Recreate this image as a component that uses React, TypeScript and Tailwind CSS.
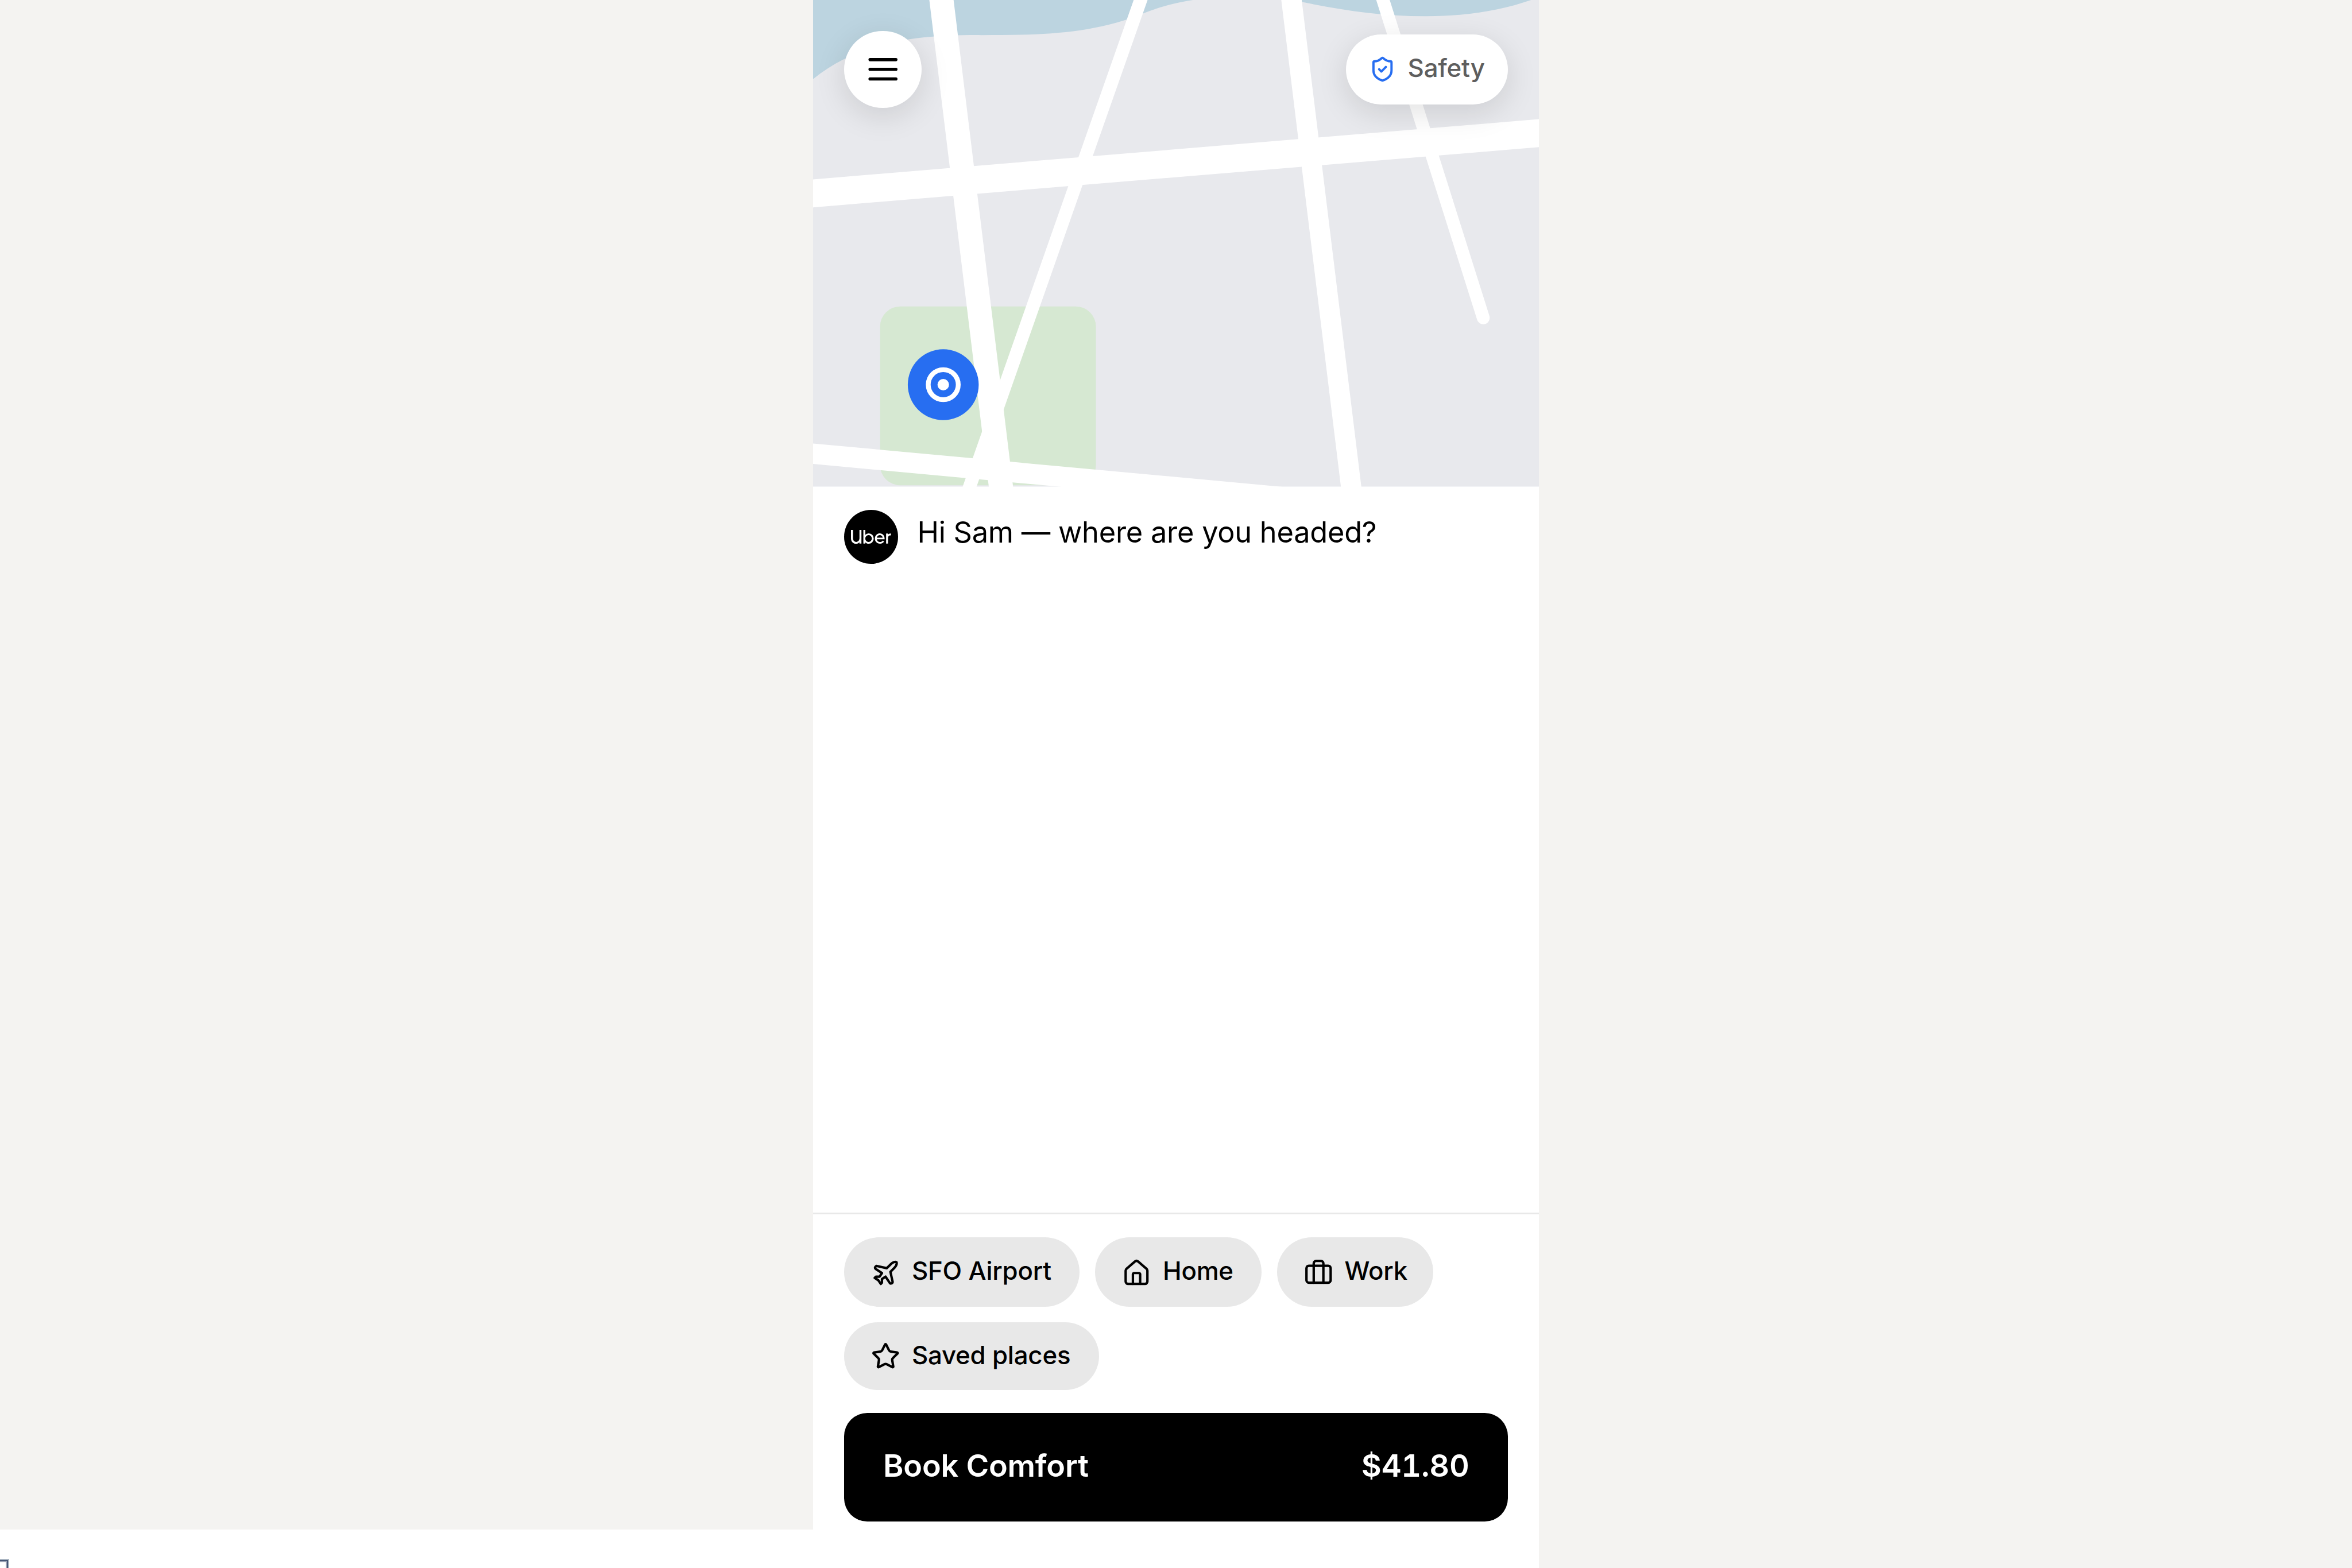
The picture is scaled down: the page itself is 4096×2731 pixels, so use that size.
import React from 'react';
import { Briefcase, House, Plane, ShieldCheck, Star, type LucideIcon } from 'lucide-react';
import { SiUber } from 'react-icons/si';

interface Place {
  label: string;
  icon: LucideIcon;
  width: string;
}

const firstRow: Place[] = [
  { label: 'SFO Airport', icon: Plane, width: 'w-[410.1px]' },
  { label: 'Home', icon: House, width: 'w-[289.5px]' },
  { label: 'Work', icon: Briefcase, width: 'w-[272.1px]' },
];

const secondRow: Place[] = [{ label: 'Saved places', icon: Star, width: 'w-[443.6px]' }];

const CityMap: React.FC = () => (
  <svg viewBox="0 0 1296 869" preserveAspectRatio="none" className="block w-full h-full">
    <rect width="1296" height="869" fill="#e8e9ed" />
    <path
      d="M0 141.3C80 76 180 62 300 62.7C400 62.7 490 62 580 28C630 7 660 2 720 -6L800 -12C900 10 990 29 1094 29C1170 29 1230 18 1282 0V-20H0Z"
      fill="#bcd4e0"
    />
    <rect x="119.6" y="547.2" width="385.4" height="319.5" rx="36" fill="#d6e8d2" />
    <g stroke="#fff" strokeLinecap="round" fill="none">
      <path d="M-60 350.3L1356 232.8" strokeWidth="49.8" />
      <path d="M-60 804.7L1000 902.7" strokeWidth="36.3" />
      <path d="M223.1 -50L347.6 969" strokeWidth="43" />
      <path d="M848.1 -50L972.9 969" strokeWidth="36.2" />
      <path d="M602.4 -50L244.4 969" strokeWidth="23.4" />
      <path d="M1001.8 -50L1196.6 567.5" strokeWidth="23" />
    </g>
    <circle cx="232.4" cy="687" r="63.3" fill="#276ef1" />
    <circle cx="232.4" cy="687" r="26.8" stroke="#fff" strokeWidth="8.6" fill="none" />
    <circle cx="232.4" cy="687" r="10.3" fill="#fff" />
  </svg>
);

const MenuIcon: React.FC = () => (
  <svg
    viewBox="0 0 24 24"
    className="w-[67.4px] h-[67.4px]"
    stroke="currentColor"
    strokeWidth="2"
    strokeLinecap="round"
    fill="none"
  >
    <path d="M4 6h16M4 12h16M4 18h16" />
  </svg>
);

interface ChipProps {
  place: Place;
  className: string;
  iconClass?: string;
  labelClass: string;
}

const PlaceChip: React.FC<ChipProps> = ({ place, className, iconClass = '', labelClass }) => {
  const Icon = place.icon;
  return (
    <button
      className={`flex items-center gap-[20.2px] pl-[47.2px] shrink-0 rounded-full bg-[#e8e8e8] text-[43.8px] leading-none tracking-[-0.2px] font-medium whitespace-nowrap ${place.width} ${className}`}
    >
      <Icon className={`w-[50.5px] h-[50.5px] shrink-0 ${iconClass}`} strokeWidth={2} />
      <span className={labelClass}>{place.label}</span>
    </button>
  );
};

export default function App() {
  return (
    <div className="relative flex w-[4096px] h-[2731px] overflow-hidden bg-white font-['Inter',sans-serif] text-black">
      <div className="w-[1416px] h-[2664px] shrink-0 bg-[#f4f3f1]" />

      <main className="flex flex-col w-[1264px] h-full shrink-0 bg-white">
        <section className="relative h-[847.5px] shrink-0 overflow-hidden">
          <CityMap />
          <div className="absolute inset-x-0 top-0 flex items-center justify-between px-[54px] pt-[53.5px]">
            <button className="flex items-center justify-center w-[134.8px] h-[134.8px] rounded-full bg-white shadow-[0_13.5px_54px_rgba(0,0,0,0.12)]">
              <MenuIcon />
            </button>
            <button className="flex items-center gap-[20.2px] w-[282.2px] h-[121.3px] pl-[40.4px] rounded-full bg-white text-[43.8px] leading-none tracking-[-0.2px] font-medium text-[#5e5e5e] shadow-[0_13.5px_54px_rgba(0,0,0,0.12)]">
              <ShieldCheck className="w-[47.2px] h-[47.2px] shrink-0 text-[#276ef1]" strokeWidth={2} />
              <span className="pb-[5px]">Safety</span>
            </button>
          </div>
        </section>

        <section className="flex items-start gap-[33px] flex-1 px-[54px] pt-[40.2px]">
          <div className="flex items-center justify-center w-[94.4px] h-[94.4px] shrink-0 rounded-full bg-black text-white">
            <SiUber className="w-[69.6px] h-[72px]" preserveAspectRatio="none" />
          </div>
          <p className="pt-[3px] text-[50.5px] leading-[72px] tracking-[-0.25px]">
            Hi Sam — where are you headed?
          </p>
        </section>

        <footer className="flex flex-col h-[619.5px] shrink-0 border-t-[3.4px] border-[#e8e8e8] px-[54px] pt-[40.4px]">
          <div className="flex gap-[27px]">
            {firstRow.map((place) => (
              <PlaceChip
                key={place.label}
                place={place}
                className="h-[121.3px]"
                iconClass="mt-[4px]"
                labelClass="pb-[4px]"
              />
            ))}
          </div>
          <div className="flex gap-[27px] mt-[27px]">
            {secondRow.map((place) => (
              <PlaceChip key={place.label} place={place} className="h-[117.7px]" labelClass="pb-[2px]" />
            ))}
          </div>
          <button className="flex items-center justify-between h-[188.9px] mt-[40.4px] pl-[68px] pr-[67.4px] pb-[6px] rounded-[40.4px] bg-black text-[53.9px] leading-none tracking-[-0.2px] font-semibold text-white">
            <span>Book Comfort</span>
            <span className="tabular-nums">$41.80</span>
          </button>
        </footer>
      </main>

      <div className="flex-1 bg-[#f4f3f1]" />

      {/* corner of a focused control that runs off the page */}
      <div className="absolute -left-[40px] top-[2715px] w-[56px] h-[60px] border-2 border-[#a9b4c1]">
        <div className="w-full h-full border-2 border-[#465776]">
          <div className="w-full h-full border-2 border-[#9aa3b5]" />
        </div>
      </div>
    </div>
  );
}
